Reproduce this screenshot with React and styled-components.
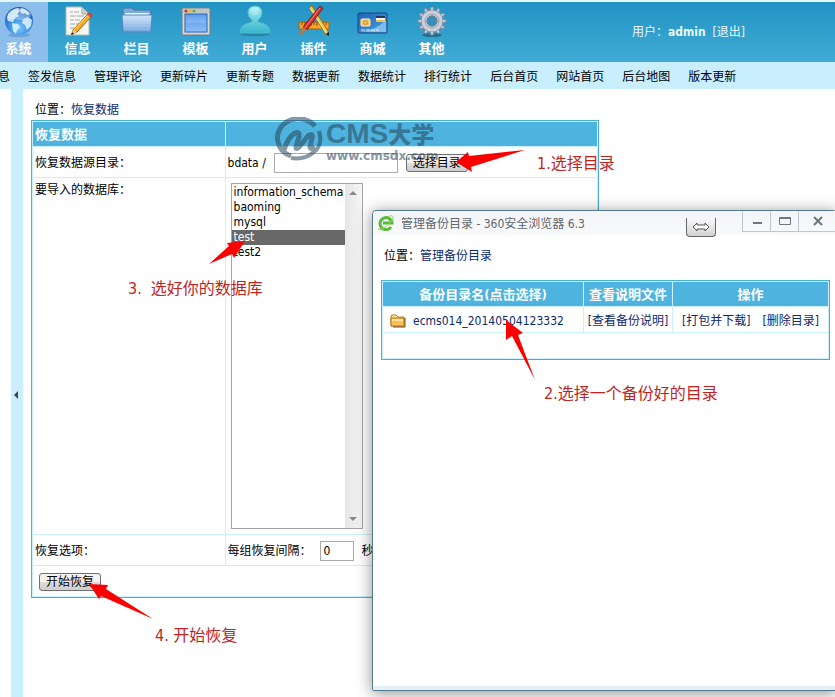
import styled, { createGlobalStyle, css } from "styled-components";

const GlobalStyle = createGlobalStyle`
  *,
  *::before,
  *::after {
    box-sizing: border-box;
  }

  body {
    margin: 0;
    background: #fff;
    color: #000;
    font-family: "DejaVu Sans Condensed", "Noto Sans CJK SC", sans-serif;
    font-size: 12px;
    line-height: 16px;
  }

  a {
    color: #0b2a6b;
    text-decoration: none;
  }

  button,
  input,
  select {
    font: inherit;
    color: inherit;
  }
`;

const Page = styled.div`
  position: relative;
  display: flex;
  flex-direction: column;
  min-height: 100vh;
  overflow: hidden;
`;

/* ---------- header ---------- */

const Header = styled.header`
  display: flex;
  align-items: center;
  border-top: 2px solid #e4f7fd;
  height: 62px;
  background: linear-gradient(#2193c3, #41abd6);
`;

const MainNav = styled.nav`
  display: flex;
  align-self: stretch;
  /* the first tab is scrolled partly out of view */
  margin-left: -11px;
`;

const NavLink = styled.a`
  display: flex;
  flex-direction: column;
  align-items: center;
  gap: 4px;
  width: 59px;
  padding-top: 3px;
  color: #fff;
  font-size: 13px;
  font-weight: 700;
  background: ${(props) => (props.$active ? "#8dbdea" : "transparent")};

  svg {
    width: 32px;
    height: 32px;
  }
`;

const UserInfo = styled.p`
  margin: 0 90px 0 auto;
  color: #e6f8ff;
  white-space: pre;

  a {
    color: inherit;
  }
`;

const SubNav = styled.nav`
  display: flex;
  align-items: center;
  gap: 18px;
  height: 27px;
  margin-left: -2px;
  padding-top: 2px;
  background: #c9efff;
  white-space: nowrap;

  a {
    color: #000;
  }
`;

/* ---------- body ---------- */

const Body = styled.div`
  display: flex;
  flex: 1;
`;

const Splitter = styled.button`
  display: flex;
  align-items: center;
  justify-content: flex-start;
  width: 12px;
  margin: 0 0 0 11px;
  padding: 6px 3px 3px;
  border: 0;
  background: #c9efff;

  svg {
    width: 4px;
    height: 8px;
  }
`;

const Main = styled.main`
  flex: 1;
  padding-top: 13px;
`;

const Breadcrumb = styled.p`
  margin: 0;
  padding-left: 12px;
`;

const Table = styled.table`
  border: 1px solid #4cadd4;
  border-collapse: separate;
  border-spacing: 1px;
  background: #c9f1fb;
`;

const RestoreTable = styled(Table)`
  width: 70%;
  margin: 2px 0 0 8px;
`;

const Row = styled.tr`
  height: ${(props) => props.$height || 30}px;
`;

const Th = styled.th`
  padding: 1px 2px 0;
  background: #4eb3de;
  color: #fff;
  font-size: 13px;
  font-weight: 700;
  text-align: ${(props) => props.$align || "center"};
  white-space: nowrap;
`;

const Td = styled.td`
  padding: 2px 2px 0;
  background: #fff;
  white-space: nowrap;

  ${(props) =>
    props.$top &&
    css`
      padding-top: 4px;
      vertical-align: top;
    `}
`;

const Field = styled.div`
  display: flex;
  align-items: center;
  gap: 8px;
`;

const TextInput = styled.input`
  width: ${(props) => props.$width}px;
  height: 20px;
  padding: 0 3px;
  border: 1px solid #ababab;
  background: #fff;
`;

const Button = styled.button`
  height: 18px;
  padding: 0 6px;
  border: 1px solid #707070;
  border-radius: 3px;
  background: linear-gradient(#f3f3f3 0 50%, #dcdcdc 50%, #cfcfcf);
  line-height: 16px;
  white-space: nowrap;
`;

const SubmitButton = styled(Button)`
  margin-left: 4px;
`;

const ListBox = styled.div`
  display: flex;
  width: 132px;
  height: 346px;
  margin: 1px 0 5px 3px;
  border: 1px solid #a4a4a4;
`;

const Select = styled.select`
  flex: 1;
  min-width: 0;
  height: 100%;
  padding: 1px 0;
  border: 0;
  outline: 0;
  background: #fff;
  overflow: hidden;

  option {
    height: 15px;
    min-height: 15px;
    padding: 0 2px;
    line-height: 15px;
  }

  option:checked {
    background: #686868 linear-gradient(#686868, #686868);
    color: #fff;
  }
`;

const ScrollTrack = styled.div`
  display: flex;
  flex-direction: column;
  justify-content: space-between;
  align-items: center;
  width: 17px;
  padding: 7px 0;
  background: linear-gradient(90deg, #e6e6e6, #f5f5f5);

  svg {
    width: 8px;
    height: 4px;
  }
`;

/* ---------- popup window ---------- */

const Window = styled.section`
  position: absolute;
  top: 210px;
  right: -2px;
  bottom: 6px;
  left: 372px;
  display: flex;
  flex-direction: column;
  border: 1px solid #557a92;
  border-radius: 4px 4px 2px 2px;
  background: #fff;
  box-shadow: 0 2px 16px rgba(0, 0, 0, 0.45);
`;

const TitleBar = styled.header`
  display: flex;
  align-items: flex-start;
  height: 24px;
  padding-left: 5px;
  border-radius: 4px 0 0;
  background: linear-gradient(#f3f5f8, #f8f9fb);

  > svg {
    width: 16px;
    height: 16px;
    margin-top: 4px;
  }
`;

const WindowTitle = styled.h1`
  flex: 1;
  margin: 5px 0 0 7px;
  color: #5f6670;
  font-size: 12px;
  font-weight: 400;
  white-space: nowrap;
`;

const PullTab = styled.button`
  display: flex;
  align-items: center;
  justify-content: center;
  width: 30px;
  height: 19px;
  margin: 7px 26px 0 0;
  padding: 0;
  border: 1px solid #666;
  border-top: 0;
  border-radius: 0 0 4px 4px;
  background: linear-gradient(#f8f9fb, #d4d4d4);

  svg {
    width: 18px;
    height: 10px;
  }
`;

const WindowButton = styled.button`
  display: flex;
  align-items: center;
  justify-content: center;
  width: ${(props) => props.$width || 28}px;
  height: 21px;
  padding: 0;
  border: 0;
  border-bottom: 1px solid #b9c7d3;
  border-left: 1px solid #b9c7d3;
  background: transparent;

  svg {
    width: 12px;
    height: 12px;
  }
`;

const WindowBody = styled.div`
  flex: 1;
  padding: 13px 6px 0 8px;
  border-bottom: 4px solid #e6eff6;

  ${Breadcrumb} {
    padding-left: 3px;
  }
`;

const DirectoryTable = styled(Table)`
  width: 100%;
  margin-top: 16px;
`;

const Entry = styled.a`
  display: flex;
  align-items: center;
  gap: 7px;
  padding-left: 5px;

  svg {
    width: 16px;
    height: 14px;
  }
`;

const Actions = styled.div`
  display: flex;
  justify-content: center;
  gap: 12px;
`;

/* ---------- things drawn over the page ---------- */

const Watermark = styled.div`
  position: absolute;
  top: 117px;
  left: 274px;
  display: flex;
  align-items: center;
  gap: 2px;
  color: #27455c;
  opacity: 0.55;
  pointer-events: none;

  svg {
    width: 50px;
    height: 46px;
  }
`;

const WatermarkText = styled.div`
  display: flex;
  flex-direction: column;
  font-family: "Liberation Sans", "Noto Sans CJK SC", sans-serif;
  font-weight: 700;

  strong {
    font-size: 28px;
    line-height: 30px;
  }

  b {
    font-size: 23px;
  }

  span {
    font-family: "DejaVu Sans", sans-serif;
    font-size: 12px;
    line-height: 12px;
  }
`;

const Note = styled.p`
  position: absolute;
  top: ${(props) => props.$top}px;
  left: ${(props) => props.$left}px;
  margin: 0;
  color: #c1231d;
  font-size: 16px;
  line-height: 20px;
  white-space: pre;
  pointer-events: none;
`;

const Arrow = styled.svg`
  position: absolute;
  top: ${(props) => props.$top}px;
  left: ${(props) => props.$left}px;
  fill: #fb0000;
  pointer-events: none;
`;

/* ---------- icons ---------- */

function GlobeIcon() {
  return (
    <svg viewBox="0 0 32 32" aria-hidden="true">
      <defs>
        <radialGradient id="globe" cx="50%" cy="75%" r="75%">
          <stop offset="0" stopColor="#7cc8ff" />
          <stop offset="0.5" stopColor="#3a8ce0" />
          <stop offset="1" stopColor="#1a55b0" />
        </radialGradient>
      </defs>
      <ellipse cx="16" cy="30" rx="11" ry="2" fill="#5c8fc4" opacity="0.6" />
      <circle cx="16" cy="16" r="14" fill="url(#globe)" />
      <path
        d="M5 9q4-5 10-6l2 3-3 3 2 2-4 2-2 4-5-1-1-3zM18 3q6 1 9 6l-3 1-2-2-3 1-2-3zM9 18l6 1 2 3-3 3-1 4-3-3zM20 14l5-2 4 3-1 6-4 4-2-5-3-2z"
        fill="#e2f4ff"
        opacity="0.85"
      />
      <path d="M4 13q2-10 12-10t12 8q-7 5-12 4T4 13z" fill="#fff" opacity="0.3" />
    </svg>
  );
}

function DocumentIcon() {
  return (
    <svg viewBox="0 0 32 32" aria-hidden="true">
      <path d="M4 2h16l7 7v21H4z" fill="#f7f7f5" stroke="#b9b9b0" />
      <path d="M20 2v7h7z" fill="#d2d2cc" stroke="#a9a9a0" />
      <path
        d="M8 7h3m1 0h5M8 11h6m1 0h7M8 15h4m1 0h5M8 19h5m1 0h3M8 23h4"
        stroke="#a6a6a6"
        strokeWidth="1"
      />
      <path d="M26 9l3 3-14 15-5 2 1-4z" fill="#f5ae2c" stroke="#a35f10" />
      <path d="M25 11L12 25" stroke="#ffdc7a" strokeWidth="1" />
      <path d="M25 9l2-2 4 3-2 3z" fill="#d8433c" />
      <path d="M11 25l4 2-5 2z" fill="#f2d8a8" />
      <path d="M9 30l1-3 2 2z" fill="#222" />
    </svg>
  );
}

function FolderIcon() {
  return (
    <svg viewBox="0 0 32 32" aria-hidden="true">
      <defs>
        <linearGradient id="folder" x1="0" y1="0" x2="0" y2="1">
          <stop offset="0" stopColor="#d3e6fa" />
          <stop offset="1" stopColor="#6ea4dc" />
        </linearGradient>
      </defs>
      <path d="M2 5q0-2 2-2h7l2 2h15q2 0 2 2v18H2z" fill="#7aa9da" stroke="#46739f" />
      <path d="M4 8h24v4H4z" fill="#eef6ff" />
      <path d="M1 10h30l-1 17H2z" fill="url(#folder)" stroke="#5486bb" />
      <path d="M3 15h26M3 18h26M3 21h26M3 24h26" stroke="#fff" opacity="0.2" />
    </svg>
  );
}

function TemplateIcon() {
  return (
    <svg viewBox="0 0 32 32" aria-hidden="true">
      <defs>
        <linearGradient id="pane" x1="0" y1="0" x2="0" y2="1">
          <stop offset="0" stopColor="#5d9bea" />
          <stop offset="1" stopColor="#b5dcff" />
        </linearGradient>
      </defs>
      <rect x="2" y="3" width="28" height="27" rx="1" fill="#d7d7d7" stroke="#77797c" />
      <rect x="3" y="4" width="26" height="4" fill="#c2c5c8" />
      <circle cx="6" cy="6" r="1.5" fill="#e02a1f" />
      <circle cx="10" cy="6" r="1.5" fill="#f0b41c" />
      <circle cx="14" cy="6" r="1.5" fill="#52b52e" />
      <rect x="5" y="9" width="22" height="18" fill="url(#pane)" stroke="#2860b8" />
      <path d="M5 18q10-1 22 0v9H5z" fill="#3f86e2" opacity="0.35" />
    </svg>
  );
}

function UserIcon() {
  return (
    <svg viewBox="0 0 32 32" aria-hidden="true">
      <defs>
        <linearGradient id="user" x1="0" y1="0" x2="0" y2="1">
          <stop offset="0" stopColor="#a2eef5" />
          <stop offset="1" stopColor="#39b5cc" />
        </linearGradient>
      </defs>
      <ellipse cx="16" cy="29" rx="15" ry="2" fill="#1f6485" opacity="0.5" />
      <path
        d="M1 28q0-7 6-9l6-2v-2q-4-3-4-7 0-7 7-7t7 7q0 4-4 7v2l6 2q6 2 6 9z"
        fill="url(#user)"
        stroke="#4fbdd2"
      />
      <ellipse cx="16" cy="6" rx="4" ry="4" fill="#fff" opacity="0.25" />
    </svg>
  );
}

function PluginIcon() {
  return (
    <svg viewBox="0 0 32 32" aria-hidden="true">
      <rect x="1" y="17" width="30" height="7" fill="#f2a62d" stroke="#a8650b" />
      <path d="M4 17v3m3-3v4m3-4v3m3-3v4m3-4v3m3-3v4m3-4v3m3-3v4m3-4v3" stroke="#7f4b05" />
      <path d="M11 2l3-1 16 25v4l-3-2z" fill="#f7c648" stroke="#a06b12" />
      <path d="M12 3l16 25" stroke="#fff0a0" />
      <path d="M28 29l3 2v-4z" fill="#222" />
      <path d="M22 1l3 2L9 25l-4-3z" fill="#cf3028" stroke="#80201b" />
      <path d="M22 3L7 23" stroke="#f28d80" />
      <path d="M5 22l4 3-4 3-4 3 1-4z" fill="#b97a4a" />
    </svg>
  );
}

function CardIcon() {
  return (
    <svg viewBox="0 0 32 32" aria-hidden="true">
      <defs>
        <linearGradient id="card" x1="0" y1="0" x2="1" y2="1">
          <stop offset="0" stopColor="#1c62b5" />
          <stop offset="1" stopColor="#4ea2e2" />
        </linearGradient>
      </defs>
      <rect x="1" y="8" width="29" height="20" rx="1" fill="url(#card)" stroke="#16467f" />
      <path d="M2 27q16-1 27-12v12z" fill="#a3d7f7" opacity="0.6" />
      <rect x="19" y="11" width="9" height="6" fill="#fff" />
      <path d="M19 11h9v2h-9z" fill="#23395d" />
      <path d="M19 15h9v2h-9z" fill="#f6c04c" />
      <rect x="4" y="14" width="9" height="7" rx="1" fill="#f7c456" stroke="#fff0b8" />
      <rect x="7" y="16" width="3" height="3" fill="#fff2b0" stroke="#be8119" />
      <path d="M4 25h4m1 0h4m1 0h4m1 0h3" stroke="#e6f5ff" strokeWidth="1" />
    </svg>
  );
}

const teeth = Array.from({ length: 12 }, (_, i) => i * 30);

function GearIcon() {
  return (
    <svg viewBox="0 0 32 32" aria-hidden="true">
      <ellipse cx="16" cy="30" rx="10" ry="2" fill="#1c4c68" opacity="0.6" />
      {teeth.map((angle) => (
        <path
          key={angle}
          d="M14 6l1-4h2l1 4z"
          fill="#c9cedb"
          stroke="#858da0"
          transform={`rotate(${angle} 16 16)`}
        />
      ))}
      <circle cx="16" cy="16" r="8" fill="none" stroke="#858da0" strokeWidth="6" />
      <circle cx="16" cy="16" r="8" fill="none" stroke="#cbd0dc" strokeWidth="5" />
      <circle cx="16" cy="16" r="7" fill="none" stroke="#9aa2b4" />
      <circle cx="16" cy="16" r="5" fill="#3390bd" stroke="#777f90" />
    </svg>
  );
}

function BrowserIcon() {
  return (
    <svg viewBox="0 0 16 16" aria-hidden="true">
      <path
        d="M13 12A6 6 0 1 1 14 8H5"
        fill="none"
        stroke="#58bb38"
        strokeWidth="3"
      />
      <path d="M1 13Q-1 16 4 14 12 10 15 3q1-3-4-2" fill="none" stroke="#8ed860" strokeWidth="1" />
    </svg>
  );
}

function SmallFolderIcon() {
  return (
    <svg viewBox="0 0 16 14" aria-hidden="true">
      <path d="M1 2l1-1h4l2 2h6v9H1z" fill="#ffe39a" stroke="#b47a1d" />
      <path d="M1 4h13v8H1z" fill="#f5bf5a" stroke="#b47a1d" />
      <path d="M2 5h11v2H2z" fill="#ffe39a" />
      <path d="M15 4v9H3" fill="none" stroke="#7a4a0c" />
    </svg>
  );
}

function WatermarkLogo() {
  return (
    <svg viewBox="0 0 50 46" fill="none" stroke="currentColor" aria-hidden="true">
      <path d="M41 9A21 19 0 0 0 4 25q2 10 13 14" strokeWidth="5" />
      <path d="M45 14q4 14-5 21-9 8-23 6" strokeWidth="4" />
      <path
        d="M10 33q4-13 11-17 5-2 4 4l-3 10q0 3 3 0l9-11q5-4 4 2l-2 9q1 3 5 0"
        strokeWidth="5"
      />
    </svg>
  );
}

/* ---------- data ---------- */

const mainNav = [
  { label: "系统", icon: GlobeIcon, active: true },
  { label: "信息", icon: DocumentIcon },
  { label: "栏目", icon: FolderIcon },
  { label: "模板", icon: TemplateIcon },
  { label: "用户", icon: UserIcon },
  { label: "插件", icon: PluginIcon },
  { label: "商城", icon: CardIcon },
  { label: "其他", icon: GearIcon },
];

const subNav = [
  "息",
  "签发信息",
  "管理评论",
  "更新碎片",
  "更新专题",
  "数据更新",
  "数据统计",
  "排行统计",
  "后台首页",
  "网站首页",
  "后台地图",
  "版本更新",
];

const databases = ["information_schema", "baoming", "mysql", "test", "test2"];

/* ---------- components ---------- */

function TopBar() {
  return (
    <>
      <Header>
        <MainNav>
          {mainNav.map(({ label, icon: Icon, active }) => (
            <NavLink key={label} href="#" $active={active}>
              <Icon />
              {label}
            </NavLink>
          ))}
        </MainNav>
        <UserInfo>
          用户：<b>admin</b>  <a href="#">[退出]</a>
        </UserInfo>
      </Header>
      <SubNav>
        {subNav.map((label) => (
          <a key={label} href="#">
            {label}
          </a>
        ))}
      </SubNav>
    </>
  );
}

function RestoreForm() {
  return (
    <form onSubmit={(e) => e.preventDefault()}>
      <RestoreTable>
        <colgroup>
          <col style={{ width: "34%" }} />
          <col />
        </colgroup>
        <thead>
          <Row $height={24}>
            <Th $align="left">恢复数据</Th>
            <Th />
          </Row>
        </thead>
        <tbody>
          <Row>
            <Td>
              <label htmlFor="source">恢复数据源目录：</label>
            </Td>
            <Td>
              <Field>
                bdata /
                <TextInput id="source" type="text" $width={124} />
                <Button type="button">选择目录</Button>
              </Field>
            </Td>
          </Row>
          <Row>
            <Td $top>
              <label htmlFor="database">要导入的数据库：</label>
            </Td>
            <Td $top>
              <ListBox>
                <Select id="database" size={20} defaultValue="test">
                  {databases.map((name) => (
                    <option key={name} value={name}>
                      {name}
                    </option>
                  ))}
                </Select>
                <ScrollTrack>
                  <svg viewBox="0 0 8 4" aria-hidden="true">
                    <path d="M0 4l4-4 4 4z" fill="#8a8a8a" />
                  </svg>
                  <svg viewBox="0 0 8 4" aria-hidden="true">
                    <path d="M0 0h8L4 4z" fill="#8a8a8a" />
                  </svg>
                </ScrollTrack>
              </ListBox>
            </Td>
          </Row>
          <Row>
            <Td>恢复选项：</Td>
            <Td>
              <Field>
                <label htmlFor="interval">每组恢复间隔：</label>
                <TextInput id="interval" type="text" defaultValue="0" $width={34} />
                秒
              </Field>
            </Td>
          </Row>
          <Row>
            <Td colSpan={2}>
              <SubmitButton type="submit">开始恢复</SubmitButton>
            </Td>
          </Row>
        </tbody>
      </RestoreTable>
    </form>
  );
}

function BackupWindow() {
  return (
    <Window>
      <TitleBar>
        <BrowserIcon />
        <WindowTitle>管理备份目录 - 360安全浏览器 6.3</WindowTitle>
        <PullTab type="button" aria-label="展开">
          <svg viewBox="0 0 18 10" fill="#fff" stroke="#555" aria-hidden="true">
            <path d="M1 5l4-4v2h8V1l4 4-4 4V7H5v2z" />
          </svg>
        </PullTab>
        <WindowButton type="button" aria-label="最小化">
          <svg viewBox="0 0 12 12" aria-hidden="true">
            <path d="M2 8h9" stroke="#6d7681" strokeWidth="2" />
          </svg>
        </WindowButton>
        <WindowButton type="button" aria-label="最大化">
          <svg viewBox="0 0 12 12" fill="none" stroke="#6d7681" aria-hidden="true">
            <path d="M.5 2.500h11v7H.5zM.5 3.500h11" />
          </svg>
        </WindowButton>
        <WindowButton type="button" aria-label="关闭" $width={38}>
          <svg viewBox="0 0 12 12" aria-hidden="true">
            <path d="M2 2l8 8M10 2l-8 8" stroke="#6d7681" strokeWidth="2" />
          </svg>
        </WindowButton>
      </TitleBar>
      <WindowBody>
        <Breadcrumb>
          位置：<a href="#">管理备份目录</a>
        </Breadcrumb>
        <DirectoryTable>
          <colgroup>
            <col style={{ width: 200 }} />
            <col style={{ width: 88 }} />
            <col />
          </colgroup>
          <thead>
            <Row $height={24}>
              <Th>备份目录名(点击选择)</Th>
              <Th>查看说明文件</Th>
              <Th>操作</Th>
            </Row>
          </thead>
          <tbody>
            <Row $height={25}>
              <Td>
                <Entry href="#">
                  <SmallFolderIcon />
                  ecms014_20140504123332
                </Entry>
              </Td>
              <Td>
                <Actions>
                  <a href="#">[查看备份说明]</a>
                </Actions>
              </Td>
              <Td>
                <Actions>
                  <a href="#">[打包并下载]</a>
                  <a href="#">[删除目录]</a>
                </Actions>
              </Td>
            </Row>
            <Row $height={25}>
              <Td colSpan={3} />
            </Row>
          </tbody>
        </DirectoryTable>
      </WindowBody>
    </Window>
  );
}

function Steps() {
  return (
    <>
      <Arrow $top={148} $left={455} width="72" height="26">
        <path d="M1 14L13 4l1 4L70 2 16 19l1 5z" />
      </Arrow>
      <Note $top={154} $left={537}>
        1.选择目录
      </Note>

      <Arrow $top={318} $left={503} width="34" height="64">
        <path d="M3 2l17 13-5 2 17 45L9 18l-6 4z" />
      </Arrow>
      <Note $top={384} $left={544}>
        2.选择一个备份好的目录
      </Note>

      <Arrow $top={239} $left={207} width="40" height="28">
        <path d="M38 2L20 4l2 3L2 25l23-10 2 4z" />
      </Arrow>
      <Note $top={279} $left={128}>
        {"3.  选好你的数据库"}
      </Note>

      <Arrow $top={582} $left={87} width="68" height="40">
        <path d="M2 2l19 1-2 4 47 30-52-23-2 3z" />
      </Arrow>
      <Note $top={626} $left={155}>
        4. 开始恢复
      </Note>
    </>
  );
}

function App() {
  return (
    <>
      <GlobalStyle />
      <Page>
        <TopBar />
        <Body>
          <Splitter type="button" aria-label="收起菜单">
            <svg viewBox="0 0 4 8" aria-hidden="true">
              <path d="M4 0v8L0 4z" fill="#444" />
            </svg>
          </Splitter>
          <Main>
            <Breadcrumb>
              位置：<a href="#">恢复数据</a>
            </Breadcrumb>
            <RestoreForm />
          </Main>
        </Body>
        <Watermark>
          <WatermarkLogo />
          <WatermarkText>
            <strong>
              CMS<b>大学</b>
            </strong>
            <span>www.cmsdx.com</span>
          </WatermarkText>
        </Watermark>
        <BackupWindow />
        <Steps />
      </Page>
    </>
  );
}

export default App;
